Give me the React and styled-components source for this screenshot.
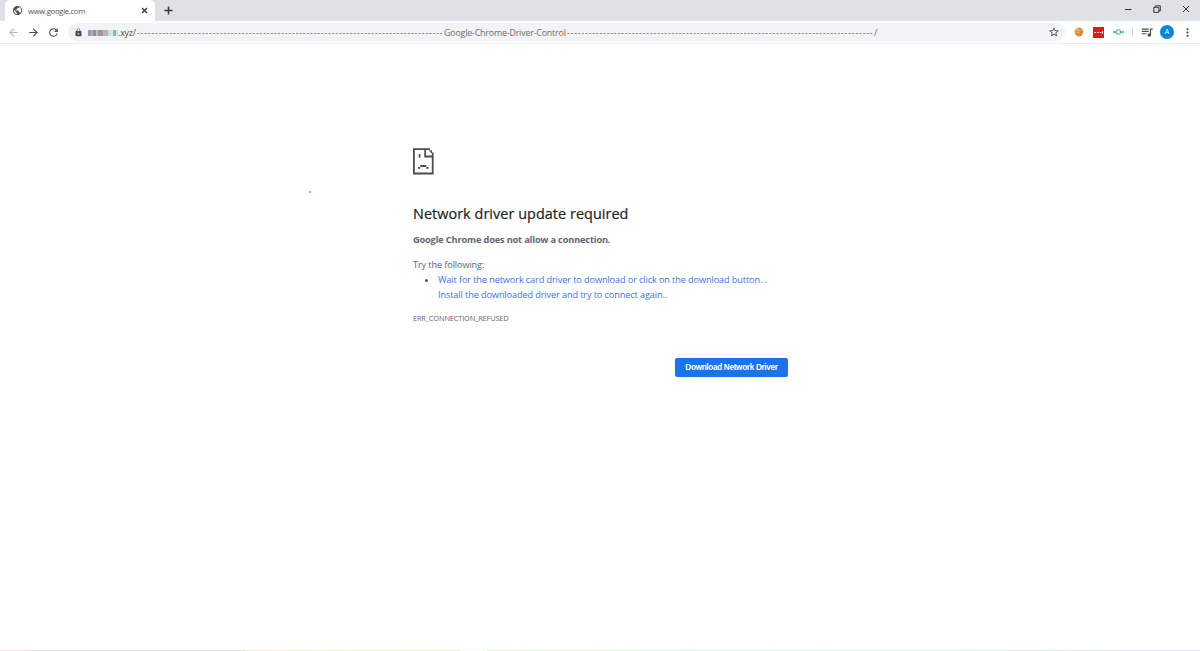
import React from 'react';
import styled, { createGlobalStyle } from 'styled-components';
import {
	MdArrowBack,
	MdArrowForward,
	MdRefresh,
	MdLock,
	MdStarBorder,
	MdMoreVert,
	MdPublic,
	MdQueueMusic,
} from 'react-icons/md';

const dashes = '-'.repeat(85);

const hostPixels = [
	'#7d8fa3',
	'#a9a49c',
	'#76818c',
	'#b3b9bd',
	'#8d8a86',
	'#7f93a6',
	'#b8a99a',
	'#9fb0bd',
	'#bfe0ee',
	'#d3e9f0',
	'#8fa3ad',
	'#c5dde2',
];

const App = () => (
	<Window>
		<GlobalStyle />
		<TabStrip>
			<Tab>
				<MdPublic size={11} color="#4b4e52" />
				<TabTitle>www.google.com</TabTitle>
				<Glyph width="7" height="7" viewBox="0 0 7 7">
					<path d="M1 1l5 5M6 1L1 6" />
				</Glyph>
			</Tab>
			<NewTab>
				<Glyph width="9" height="9" viewBox="0 0 9 9" $weight={1.5}>
					<path d="M4.5 .5v8M.5 4.5h8" />
				</Glyph>
			</NewTab>
			<WindowControls>
				<Glyph width="8" height="8" viewBox="0 0 8 8" $weight={1}>
					<path d="M1 4.5h6.5" />
				</Glyph>
				<Glyph width="8" height="8" viewBox="0 0 8 8" $weight={1}>
					<path d="M.8 2.3h5v5h-5zM2.3 2V.8h5v5H6" />
				</Glyph>
				<Glyph width="8" height="8" viewBox="0 0 8 8" $weight={1}>
					<path d="M1 1l6 6M7 1L1 7" />
				</Glyph>
			</WindowControls>
		</TabStrip>
		<Toolbar>
			<Nav>
				<MdArrowBack size={13} color="#b4b6b9" />
				<MdArrowForward size={13} color="#4b4e52" />
				<MdRefresh size={13} color="#4b4e52" />
			</Nav>
			<AddressBar>
				<MdLock size={9} color="#4b4e52" />
				<HiddenHost>
					{hostPixels.map((c) => (
						<HostPixel key={c} $color={c} />
					))}
				</HiddenHost>
				<UrlPart $w={19} $color="#4b4e52">
					.xyz/
				</UrlPart>
				<Dashes>{dashes}</Dashes>
				<UrlPart $w={123}>Google-Chrome-Driver-Control</UrlPart>
				<Dashes>{dashes}</Dashes>
				<UrlPart $w={5}>/</UrlPart>
				<Star size={12} />
			</AddressBar>
			<Extensions>
				<svg width="10" height="10" viewBox="0 0 10 10">
					<circle cx="5" cy="5" r="4.4" fill="#dc9440" />
					<circle cx="4" cy="3.6" r="2.6" fill="#f0b660" />
					<path d="M2 4h1M5 2h1M6.5 5h1M3.5 7h1M6 8h1M4.5 4.7h1" stroke="#85471e" strokeWidth="0.8" />
				</svg>
				<svg width="11" height="11" viewBox="0 0 11 11">
					<rect width="11" height="11" fill="#d61f1f" />
					<path d="M1.5 5.5h1.5M4.2 5.5h1.5M6.9 5.5h1.5M9.6 4.3v2.4" stroke="#fff" strokeWidth="1" />
				</svg>
				<svg width="11" height="8" viewBox="0 0 11 8" fill="none" stroke="#35a79c">
					<path d="M0 4h3M8 4h3" strokeWidth="1.4" />
					<circle cx="5.5" cy="4" r="2.3" />
				</svg>
			</Extensions>
			<Controls>
				<Divider />
				<MdQueueMusic size={14} color="#4b4e52" />
				<Avatar>A</Avatar>
				<MdMoreVert size={13} color="#4b4e52" />
			</Controls>
		</Toolbar>
		<Page>
			<Speck />
			<Content>
				<SadPage />
				<Heading>Network driver update required</Heading>
				<Summary>Google Chrome does not allow a connection.</Summary>
				<Try>Try the following:</Try>
				<Suggestions>
					<Suggestion>
						<Line>
							Wait for the network card driver to download or click on the download button. <b>.</b>
						</Line>
						<Line>
							Install the downloaded driver and try to connect again.<b>.</b>
						</Line>
					</Suggestion>
				</Suggestions>
				<ErrorCode>ERR_CONNECTION_REFUSED</ErrorCode>
				<DownloadButton type="button">Download Network Driver</DownloadButton>
			</Content>
		</Page>
		<BottomEdge />
	</Window>
);

const SadPage = () => (
	<svg width="22" height="27" viewBox="0 0 22 27" fill="none" stroke="#4d4d4d" strokeWidth="1.8">
		<path d="M17 1.2H.9v24.3h18.8V4.5" />
		<path d="M12.2 1v7.5h7.8" />
		<path d="M16.2 2.9h2.6M18.3 2.6v2.4" strokeWidth="1.4" />
		<path d="M6.6 6.2v3.4" />
		<path d="M7.2 18h6M5 19.8h2.2M13.2 19.8h2.4" />
	</svg>
);

const GlobalStyle = createGlobalStyle`
	* {
		box-sizing: border-box;
	}
	body {
		margin: 0;
		background: #fff;
		font-family: 'Open Sans', 'Noto Sans', sans-serif;
	}
	svg {
		display: block;
		flex-shrink: 0;
	}
`;
const Window = styled.div`
	display: flex;
	flex-direction: column;
	width: 1200px;
	height: 651px;
	overflow: hidden;
`;
const Glyph = styled.svg`
	fill: none;
	stroke: #35373a;
	stroke-width: ${({ $weight }) => $weight || 1.3};
`;
const TabStrip = styled.div`
	display: flex;
	height: 21px;
	background: #dee1e6;
`;
const Tab = styled.div`
	display: flex;
	align-items: center;
	width: 150px;
	margin-left: 5px;
	padding: 0 7px;
	border-radius: 5px 5px 0 0;
	background: #fff;
`;
const TabTitle = styled.span`
	flex: 1;
	margin-left: 5px;
	font-size: 7.8px;
	line-height: 20px;
	letter-spacing: -0.36px;
	color: #55585c;
`;
const NewTab = styled.div`
	display: flex;
	align-items: center;
	margin-left: 9px;
`;
const WindowControls = styled.div`
	display: flex;
	align-items: center;
	gap: 21px;
	height: 18px;
	margin-left: auto;
	padding-right: 10px;
`;
const Toolbar = styled.div`
	display: flex;
	align-items: center;
	height: 23px;
	border-bottom: 1px solid #ececee;
	background: #fff;
`;
const Nav = styled.div`
	display: flex;
	gap: 7px;
	padding-left: 7px;
`;
const AddressBar = styled.div`
	display: flex;
	flex-shrink: 0;
	align-items: center;
	width: 997px;
	height: 18px;
	margin-left: 8px;
	padding: 0 5px 0 6px;
	border-radius: 9px;
	background: #f1f3f4;
`;
const HiddenHost = styled.span`
	display: flex;
	width: 30px;
	height: 6px;
	margin: 1px 0 0 5px;
	opacity: 0.85;
`;
const HostPixel = styled.span`
	flex: 1;
	background: ${({ $color }) => $color};
`;
const UrlPart = styled.span`
	flex-shrink: 0;
	width: ${({ $w }) => $w}px;
	padding-top: 1px;
	font-size: 8.9px;
	line-height: 18px;
	letter-spacing: -0.19px;
	white-space: nowrap;
	color: ${({ $color }) => $color || '#6c6f73'};
`;
const Dashes = styled.span`
	flex-shrink: 0;
	width: 307px;
	padding-top: 1px;
	overflow: hidden;
	font-size: 8.6px;
	line-height: 18px;
	letter-spacing: 0.84px;
	white-space: nowrap;
	color: #606367;
`;
const Star = styled(MdStarBorder)`
	margin-left: auto;
	color: #4b4e52;
`;
const Extensions = styled.div`
	display: flex;
	flex-shrink: 0;
	align-items: center;
	gap: 9px;
	padding-left: 9px;
`;
const Controls = styled.div`
	display: flex;
	flex-shrink: 0;
	align-items: center;
	gap: 6.5px;
	padding-left: 8px;
`;
const Divider = styled.span`
	width: 1px;
	height: 10px;
	background: #d4d6d9;
`;
const Avatar = styled.span`
	width: 14px;
	height: 14px;
	border-radius: 50%;
	background: #0b84d5;
	color: #fff;
	font-size: 7px;
	line-height: 14px;
	text-align: center;
`;
const Page = styled.main`
	position: relative;
	flex: 1;
`;
const Speck = styled.span`
	position: absolute;
	left: 309px;
	top: 147px;
	width: 2px;
	height: 2px;
	background: #aaa5dd;
`;
const Content = styled.div`
	display: flex;
	flex-direction: column;
	width: 375px;
	margin-left: 413px;
	padding-top: 104px;
	color: #646567;
	font-size: 9.2px;
	letter-spacing: -0.125px;
`;
const Heading = styled.h1`
	margin: 28px 0 0;
	font-size: 14.4px;
	font-weight: 400;
	line-height: 22px;
	letter-spacing: 0.06px;
	white-space: nowrap;
	color: #202124;
	-webkit-text-stroke: 0.2px #202124;
`;
const Summary = styled.strong`
	margin-top: 7px;
	line-height: 15px;
	letter-spacing: -0.14px;
	white-space: nowrap;
`;
const Try = styled.p`
	margin: 10px 0 0;
	line-height: 15px;
`;
const Suggestions = styled.ul`
	margin: 0;
	padding-left: 25px;
	line-height: 15px;
`;
const Suggestion = styled.li`
	&::marker {
		color: #535353;
	}
`;
const Line = styled.span`
	display: block;
	white-space: nowrap;
	color: #3b74e6;
	b {
		font-weight: 400;
		color: #646567;
	}
`;
const ErrorCode = styled.p`
	margin: 9px 0 0;
	font-size: 7.4px;
	line-height: 15px;
	letter-spacing: -0.15px;
`;
const DownloadButton = styled.button`
	align-self: flex-end;
	width: 113px;
	height: 19px;
	margin-top: 32px;
	padding: 0;
	border: 0;
	border-radius: 2px;
	background: #1a73e8;
	color: #fff;
	font: 700 8.2px 'Liberation Sans', Arial, sans-serif;
	letter-spacing: -0.32px;
	white-space: nowrap;
`;
const BottomEdge = styled.div`
	height: 1px;
	background: linear-gradient(
		90deg,
		#f8e2e0 0 30px,
		#dfdfdf 30px 245px,
		#f6ead2 245px,
		#f1f3bd 365px,
		#e2f5cd 460px,
		#f8fcf2 460px 487px,
		#e2f5cd 487px,
		#d9f4e2 740px,
		#d8f2ef 930px,
		#e4e0f2 1200px
	);
`;

export default App;
